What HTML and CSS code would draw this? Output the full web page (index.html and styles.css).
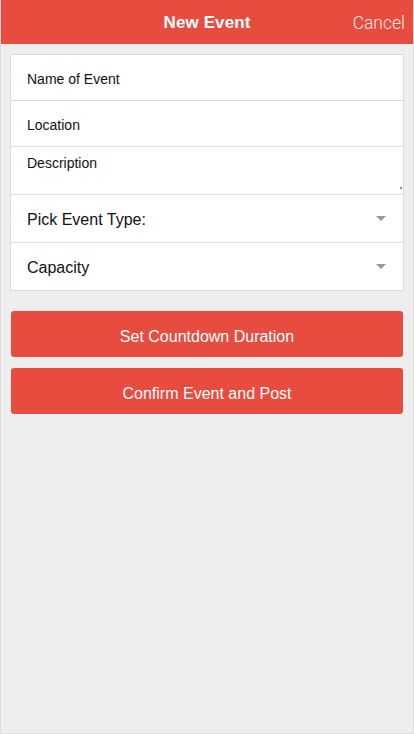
FILE: index.html
```html
<!DOCTYPE html>
<html>
<head>
<meta charset="utf-8">
<link rel="stylesheet" href="styles.css">
</head>
<body>
<div class="page">
  <header class="bar">
    <span class="bar-side"></span>
    <h1 class="bar-title">New Event</h1>
    <span class="bar-side bar-right"><span class="cancel">Cancel</span></span>
  </header>
  <main class="content">
    <form class="card">
      <div class="row"><input class="field" type="text" placeholder="Name of Event"></div>
      <div class="row"><input class="field" type="text" placeholder="Location"></div>
      <div class="row row-area"><textarea class="area" placeholder="Description"></textarea></div>
      <div class="row row-select"><span class="select-label">Pick Event Type:</span><span class="caret"></span></div>
      <div class="row row-select"><span class="select-label">Capacity</span><span class="caret"></span></div>
    </form>
    <div class="actions">
      <button class="btn" type="button">Set Countdown Duration</button>
      <button class="btn" type="button">Confirm Event and Post</button>
    </div>
  </main>
</div>
</body>
</html>
```
FILE: styles.css
```css
* { box-sizing: border-box; }
html, body { margin: 0; padding: 0; }
body {
  font-family: "Liberation Sans", Arial, sans-serif;
  color: #111;
  background: #eee;
}
.page {
  width: 414px;
  height: 734px;
  border: 1px solid #dcdcdc;
  border-top: 0;
  background: #eeeeee;
  display: flex;
  flex-direction: column;
}
.bar {
  height: 44px;
  background: #e74c3f;
  display: grid;
  grid-template-columns: 1fr auto 1fr;
  align-items: center;
  color: #fff;
  padding-top: 2px;
}
.bar-title {
  margin: 0;
  font-size: 17px;
  font-weight: bold;
  letter-spacing: 0.1px;
}
.bar-right {
  display: flex;
  justify-content: flex-end;
  padding-right: 8px;
}
.cancel {
  font-family: Roboto, "Liberation Sans", sans-serif;
  font-size: 17.5px;
  font-weight: 300;
  color: rgba(255,255,255,0.9);
}
.content {
  padding: 10px 9px 0;
}
.card {
  margin: 0;
  background: #fff;
  border: 1px solid #dadada;
  display: flex;
  flex-direction: column;
}
.row {
  height: 46px;
  border-top: 1px solid #dadada;
  display: flex;
  align-items: center;
}
.row:first-child { border-top: 0; height: 45px; }
.field {
  width: 100%;
  height: 100%;
  border: 0;
  outline: none;
  padding: 3px 16px 0;
  font-family: "Liberation Sans", Arial, sans-serif;
  font-size: 14px;
  background: transparent;
}
.field::placeholder, .area::placeholder { color: #111; opacity: 1; }
.row-area { height: 48px; align-items: stretch; position: relative; }
.area {
  width: 100%;
  border: 0;
  outline: none;
  padding: 8px 16px 0;
  font-family: "Liberation Sans", Arial, sans-serif;
  font-size: 14px;
  background: transparent;
  resize: none;
}
.row-area::after {
  content: "";
  position: absolute;
  right: 1px;
  bottom: 5px;
  width: 2px;
  height: 2px;
  background: #888;
}
.row-select {
  height: 48px;
  justify-content: space-between;
  padding: 2px 17px 0 16px;
}
.select-label {
  font-size: 16px;
  color: #111;
}
.caret {
  width: 0;
  height: 0;
  margin-top: -2px;
  border-left: 5px solid transparent;
  border-right: 5px solid transparent;
  border-top: 5px solid #999;
}
.actions {
  padding: 20px 1px 0;
  display: flex;
  flex-direction: column;
  gap: 11px;
}
.btn {
  height: 46px;
  border: 0;
  border-radius: 3px;
  background: #e74c3f;
  color: #fff;
  padding: 5px 0 0;
  font-family: "Liberation Sans", Arial, sans-serif;
  font-size: 16px;
  cursor: pointer;
}
```
